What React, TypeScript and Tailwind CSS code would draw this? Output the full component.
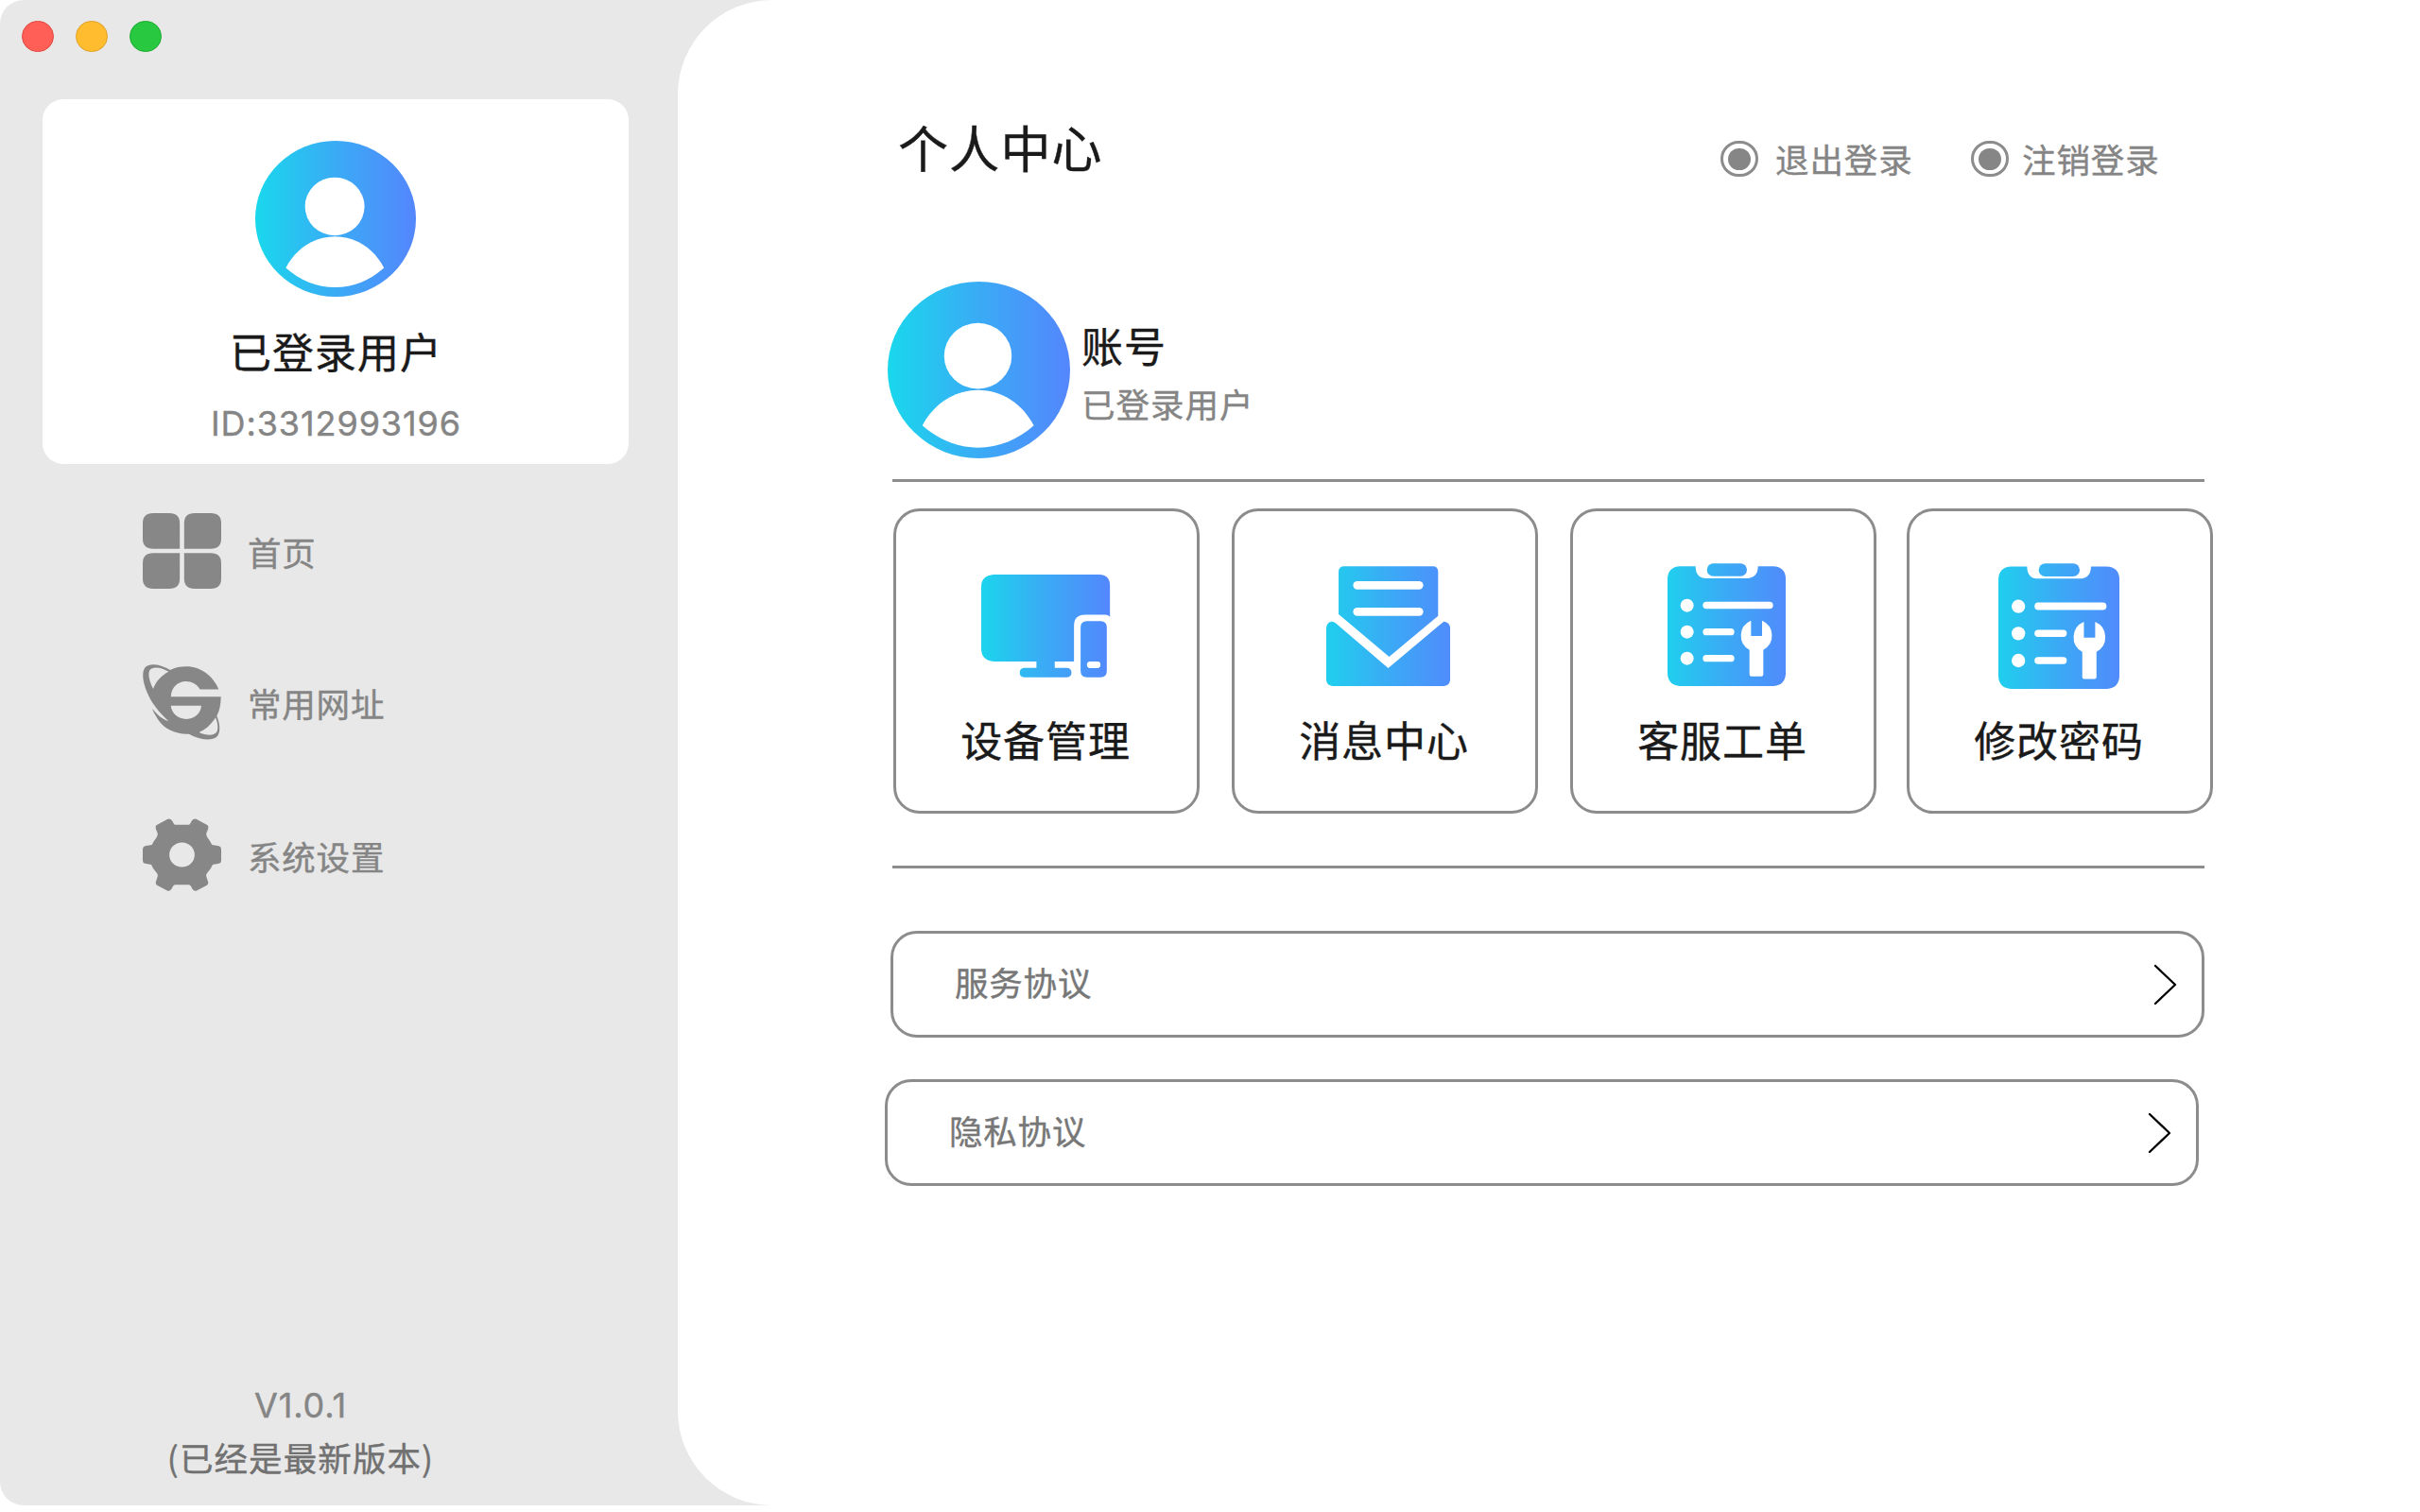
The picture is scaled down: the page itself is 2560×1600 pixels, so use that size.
import type { ReactNode } from "react";

const CJK = "font-['Noto_Sans_CJK_SC',sans-serif]";
const LATIN = "font-['Inter','Noto_Sans_CJK_SC',sans-serif]";

function Gradient({ id, x1, x2 }: { id: string; x1: number; x2: number }) {
  return (
    <defs>
      <linearGradient id={id} gradientUnits="userSpaceOnUse" x1={x1} x2={x2} y1="0" y2="0">
        <stop offset="0" stopColor="#19d8ec" />
        <stop offset="0.5" stopColor="#3aabf5" />
        <stop offset="1" stopColor="#5486fd" />
      </linearGradient>
    </defs>
  );
}

function Avatar({ id, className }: { id: string; className: string }) {
  return (
    <svg className={className} viewBox="117 594 578 561" preserveAspectRatio="none">
      <Gradient id={id} x1={117} x2={695} />
      <ellipse cx="406" cy="874.5" rx="289" ry="280.5" fill={`url(#${id})`} />
      <ellipse cx="403" cy="830" rx="107" ry="104.500" fill="#fff" />
      <path d="M227 1051C261 984 328 938 404 938S546 984 580 1051C531 1095 470 1121 404 1121S277 1095 227 1051Z" fill="#fff" />
    </svg>
  );
}

function HomeIcon() {
  return (
    <svg className="h-[80px] w-[83px] shrink-0" viewBox="92 69 248 238" preserveAspectRatio="none" fill="#878787">
      <path d="M125 69H176Q209 69 209 101V181H125Q92 181 92 149V101Q92 69 125 69Z" />
      <path d="M256 69H307Q340 69 340 101V149Q340 181 307 181H223V101Q223 69 256 69Z" />
      <path d="M125 195H209V275Q209 307 176 307H125Q92 307 92 275V227Q92 195 125 195Z" />
      <path d="M223 195H307Q340 195 340 227V275Q340 307 307 307H256Q223 307 223 275Z" />
    </svg>
  );
}

function GlobeIcon() {
  return (
    <svg className="h-[80px] w-[83px] shrink-0" viewBox="92 548 248 239" preserveAspectRatio="none" fill="#878787">
      <path
        fillRule="evenodd"
        d="M332 627H273C263 611 247 602 228 602C203 602 182 622 181 650H339C339 674 335 694 326 711C337 738 339 765 325 778C309 791 270 786 238 768C190 770 152 747 136 715C130 706 124 697 122 688C136 706 152 722 174 728C142 699 118 668 105 635C93 607 88 577 98 560C110 543 145 546 179 566C194 558 211 555 230 555C275 555 315 585 332 627ZM174 571C148 556 122 554 114 567C107 580 114 604 125 626C133 602 151 583 174 571ZM181 679C183 703 203 721 230 721C256 721 276 703 277 679ZM322 716C311 735 293 753 270 763C292 773 315 774 324 764C332 754 330 735 322 716Z"
      />
    </svg>
  );
}

function GearIcon() {
  return (
    <svg className="h-[77px] w-[83px] shrink-0" viewBox="92 1038 248 230" preserveAspectRatio="none" fill="#878787">
      <path
        fillRule="evenodd"
        d="M193 1058H239Q243 1055 246 1047Q251 1037 261 1040L297 1060Q301 1064 298 1073L293 1085Q292 1092 297 1099Q306 1110 311 1122L333 1125Q340 1127 340 1135V1172Q340 1180 333 1181L313 1184Q308 1197 297 1209Q291 1215 293 1222L299 1240Q300 1245 295 1249L261 1267Q254 1269 249 1261Q244 1249 239 1248H193Q188 1249 183 1261Q178 1269 171 1267L137 1249Q132 1245 133 1240L139 1222Q141 1215 135 1209Q124 1197 119 1184L99 1181Q92 1180 92 1172V1135Q92 1127 99 1125L121 1122Q126 1110 135 1099Q140 1092 139 1085L134 1073Q131 1064 135 1060L171 1040Q181 1037 186 1047Q189 1055 193 1058ZM216 1114A40 39 0 1 0 216 1192A40 39 0 1 0 216 1114Z"
      />
    </svg>
  );
}

function DevicesIcon() {
  return (
    <svg className="ml-[90px] mt-[67px] h-[109px] w-[136.500px]" viewBox="325 234 409 328" preserveAspectRatio="none">
      <Gradient id="devices" x1={310} x2={740} />
      <g fill="url(#devices)">
        <path d="M365 234H698Q733 234 733 270V369Q728 362 718 362H654Q619 362 619 397V511H558V531H597Q611 533 611 546T597 561H461Q447 560 447 546T461 531H500V511H365Q325 507 325 470V273Q325 237 365 234Z" />
        <path
          fillRule="evenodd"
          d="M660 382H703Q723 382 723 402V541Q723 561 703 561H660Q640 561 640 541V402Q640 382 660 382ZM670 511Q660 512 660 521T670 532H693Q703 531 703 521T693 511Z"
        />
      </g>
    </svg>
  );
}

function MessageIcon() {
  return (
    <svg className="ml-[96.500px] mt-[57.500px] h-[127px] w-[131px]" viewBox="337 205 392 381" preserveAspectRatio="none">
      <Gradient id="message" x1={290} x2={770} />
      <g fill="url(#message)">
        <path d="M394 206H674Q691 206 691 223V363L536 493L376 358V223Q376 206 394 206Z" />
        <path d="M354 381Q361 381 368 387L533 529L709 381Q728 383 729 401V568Q727 584 710 586H357Q339 584 337 568V401Q338 384 354 381Z" />
      </g>
      <rect x="422" y="253" width="222" height="26" rx="13" fill="#fff" />
      <rect x="422" y="337" width="222" height="26" rx="13" fill="#fff" />
    </svg>
  );
}

function TicketIcon({ id, className }: { id: string; className: string }) {
  return (
    <svg className={className} viewBox="341 196 375 390" preserveAspectRatio="none">
      <Gradient id={id} x1={295} x2={745} />
      <g fill={`url(#${id})`}>
        <path d="M381 206H430Q430 244 465 244H592Q628 243 628 206H676Q716 208 716 246V547Q714 583 678 586H380Q343 583 341 547V246Q342 208 381 206Z" />
        <rect x="466" y="197" width="127" height="40" rx="20" />
      </g>
      <g fill="#fff">
        <circle cx="403" cy="330" r="21" />
        <circle cx="403" cy="414" r="21" />
        <circle cx="403" cy="498" r="21" />
        <rect x="453" y="318" width="223" height="23" rx="11.500" />
        <rect x="453" y="403" width="100" height="22" rx="11" />
        <rect x="453" y="487" width="100" height="22" rx="11" />
        <path d="M606 378V427H641V378A53 52 0 0 1 645 471V549Q645 555 639 555H607Q601 555 601 549V471A53 52 0 0 1 606 378Z" />
      </g>
    </svg>
  );
}

function NavItem({ icon, label, className }: { icon: ReactNode; label: string; className: string }) {
  return (
    <div className={`flex items-center ${className}`}>
      {icon}
      <span className="ml-[28px] mt-[2px] text-[35.500px] leading-[40px] tracking-[0.8px] text-[#858585]">{label}</span>
    </div>
  );
}

function RadioAction({ label, className, gap }: { label: string; className: string; gap: string }) {
  return (
    <div className={`flex h-[38px] items-center ${className}`}>
      <span className="flex h-[38px] w-[40px] items-center justify-center rounded-full border-3 border-[#8c8c8c]">
        <span className="h-[23px] w-[24px] rounded-full bg-[#868686]" />
      </span>
      <span className={`text-[35.500px] leading-[38px] tracking-[0.9px] text-[#858585] ${gap}`}>{label}</span>
    </div>
  );
}

function FeatureCard({ icon, label, className }: { icon: ReactNode; label: string; className: string }) {
  return (
    <div className={`h-[323px] w-[324px] shrink-0 rounded-[28px] border-3 border-[#8c8c8c] ${className}`}>
      <div className="flex h-[217px] items-start">{icon}</div>
      <div className="pr-[2px] text-center text-[44px] leading-[48px] tracking-[0.9px] text-[#1a1a1a]">{label}</div>
    </div>
  );
}

function AgreementRow({ label, className }: { label: string; className: string }) {
  return (
    <div
      className={`flex h-[113px] w-[1390px] items-center justify-between rounded-[28px] border-3 border-[#8c8c8c] pl-[65px] pr-[26px] ${className}`}
    >
      <span className="-mt-[5px] text-[35.500px] leading-[40px] tracking-[0.8px] text-[#777]">{label}</span>
      <svg className="h-[44px] w-[25px]" viewBox="0 0 25 44" fill="none" stroke="#000" strokeWidth="2.300" strokeLinecap="round" strokeLinejoin="round">
        <path d="M2 2L23 22L2 42" />
      </svg>
    </div>
  );
}

export default function App() {
  return (
    <div className={`h-[1600px] w-[2560px] overflow-hidden bg-white [-webkit-text-stroke:0.4px] ${CJK}`}>
      <div className="flex h-[1593px] rounded-l-[25px] bg-[#e8e8e8]">
        <aside className="flex w-[717px] shrink-0 flex-col">
          <div className="flex gap-[23px] pl-[23px] pt-[22px]">
            <span className="h-[33px] w-[34px] rounded-full border border-[#e2463f] bg-[#ff5f57]" />
            <span className="h-[33px] w-[34px] rounded-full border border-[#e0a028] bg-[#febc2e]" />
            <span className="h-[33px] w-[34px] rounded-full border border-[#1daa2e] bg-[#28c840]" />
          </div>

          <section className="ml-[45px] mt-[50px] flex h-[386px] w-[620px] flex-col items-center rounded-[22px] bg-white">
            <Avatar id="avatar-side" className="mt-[44px] h-[165px] w-[170px]" />
            <div className="mt-[29px] pl-[1px] text-[44px] leading-[56px] tracking-[1px] text-[#1a1a1a]">已登录用户</div>
            <div className={`mt-[29px] pl-[1px] text-[36px] leading-[40px] tracking-[0.9px] text-[#858585] ${LATIN}`}>ID:3312993196</div>
          </section>

          <nav className="ml-[151px] mt-[52px]">
            <NavItem icon={<HomeIcon />} label="首页" className="h-[80px]" />
            <NavItem icon={<GlobeIcon />} label="常用网址" className="mt-[80px] h-[80px]" />
            <NavItem icon={<GearIcon />} label="系统设置" className="mt-[83px] h-[77px]" />
          </nav>

          <footer className="mb-[31px] ml-[117px] mt-auto w-[402px] text-center">
            <div className={`text-[36px] leading-[40px] tracking-[0.9px] text-[#858585] ${LATIN}`}>V1.0.1</div>
            <div className="mt-[15px] text-[35.500px] leading-[40px] tracking-[1.1px] text-[#717171]">(已经是最新版本)</div>
          </footer>
        </aside>

        <main className="flex-1 rounded-bl-[100px] rounded-tl-[100px] bg-white">
          <header className="ml-[233px] flex h-[184px] pt-[125px]">
            <h1 className="w-[870px] text-[53px] leading-[60px] tracking-[1.2px] text-[#1a1a1a]">个人中心</h1>
            <RadioAction label="退出登录" className="mt-[24px] w-[265px]" gap="ml-[18px]" />
            <RadioAction label="注销登录" className="mt-[24px]" gap="ml-[14px]" />
          </header>

          <section className="ml-[222px] mt-[114px] flex">
            <Avatar id="avatar-main" className="h-[187px] w-[193px]" />
            <div className="ml-[12px] pt-[43px]">
              <div className="text-[44px] leading-[48px] tracking-[1px] text-[#1a1a1a]">账号</div>
              <div className="mt-[18px] text-[35.500px] leading-[40px] tracking-[1px] text-[#858585]">已登录用户</div>
            </div>
          </section>

          <div className="ml-[227px] mt-[22px] h-[3px] w-[1388px] bg-[#8c8c8c]" />

          <section className="ml-[228px] mt-[28px] flex">
            <FeatureCard icon={<DevicesIcon />} label="设备管理" className="" />
            <FeatureCard icon={<MessageIcon />} label="消息中心" className="ml-[34px]" />
            <FeatureCard
              icon={<TicketIcon id="ticket" className="ml-[99.500px] mt-[54.500px] h-[130px] w-[125px]" />}
              label="客服工单"
              className="ml-[34px]"
            />
            <FeatureCard
              icon={<TicketIcon id="password" className="ml-[93.500px] mt-[54.500px] h-[133px] w-[128px]" />}
              label="修改密码"
              className="ml-[32px]"
            />
          </section>

          <div className="ml-[227px] mt-[55px] h-[3px] w-[1388px] bg-[#8c8c8c]" />

          <AgreementRow label="服务协议" className="ml-[225px] mt-[66px]" />
          <AgreementRow label="隐私协议" className="ml-[219px] mt-[44px]" />
        </main>
      </div>
    </div>
  );
}
